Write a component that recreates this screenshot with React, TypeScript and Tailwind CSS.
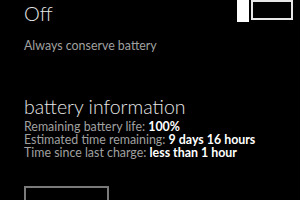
export default function App() {
  return (
    <div className="w-[300px] h-[200px] overflow-hidden bg-black font-['Lato',sans-serif] pl-6">
      <div className="flex items-start justify-between pr-[7px]">
        <div className="text-[20px] leading-[26px] font-light text-[#e6e6e6]">Off</div>
        <div className="flex items-start gap-[2px]">
          <div className="w-[12px] h-[22px] bg-white" />
          <div className="w-[42px] h-[20px] border-2 border-[#e6e6e6]" />
        </div>
      </div>
      <div className="mt-[11px] text-[12.4px] leading-[18px] text-[#a0a0a0]">Always conserve battery</div>
      <div className="mt-[39px] text-[19.5px] leading-[26px] font-light text-[#e6e6e6]">battery information</div>
      <div className="text-[12.4px] leading-[13px] text-[#a0a0a0]">
        <div>
          Remaining battery life: <span className="font-bold text-white">100%</span>
        </div>
        <div>
          Estimated time remaining: <span className="font-bold text-white">9 days 16 hours</span>
        </div>
        <div>
          Time since last charge: <span className="font-bold text-white">less than 1 hour</span>
        </div>
      </div>
      <div className="mt-[27px] w-[85px] h-[20px] border-2 border-[#7a7a7a]" />
    </div>
  );
}
